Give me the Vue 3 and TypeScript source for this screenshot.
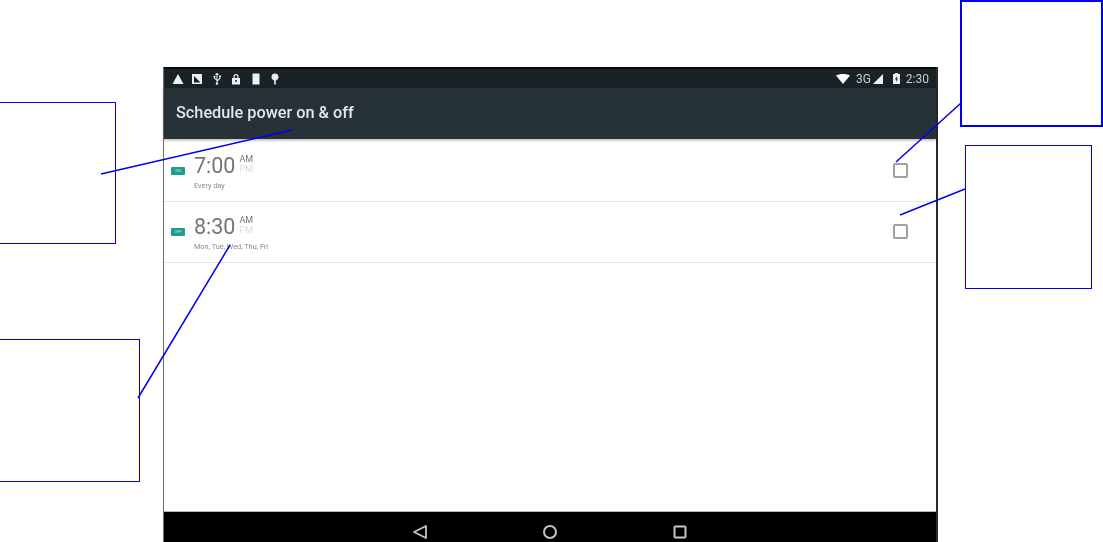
<template>
  <div class="page">
    <div class="tablet">
      <div class="status-bar">
        <div class="status-icons">
          <svg v-for="icon in leftIcons" :key="icon" width="12" height="12" viewBox="0 0 12 12" fill="#eceff1">
            <path :d="icon" fill-rule="evenodd" />
          </svg>
        </div>
        <div class="status-right">
          <svg class="wifi" width="14" height="10" viewBox="0 0 14 10" fill="#fff"><path d="M0 1.500C4 -.5 10 -.5 14 1.500L7 10z" /></svg>
          <span class="net">3G</span>
          <svg class="signal" width="10" height="10" viewBox="0 0 10 10" fill="#eceff1"><path d="M10 0V10H0z" /></svg>
          <svg class="battery" width="7" height="11" viewBox="0 0 7 11" fill="#eceff1">
            <path fill-rule="evenodd" d="M2 0H5V1H7V11H0V1H2zM4 3 2 6.500H3.300L3 9 5 5.500H3.700z" />
          </svg>
          <span class="clock">2:30</span>
        </div>
      </div>

      <div class="app-bar">Schedule power on &amp; off</div>

      <ul class="schedule-list">
        <li v-for="item in schedules" :key="item.time" class="schedule-row">
          <span class="tag">{{ item.tag }}</span>
          <div class="details">
            <div class="time-line">
              <span class="time">{{ item.time }}</span>
              <div class="meridiem">
                <span class="am">AM</span>
                <span class="pm">PM</span>
              </div>
            </div>
            <div class="days">{{ item.days }}</div>
          </div>
          <span class="checkbox"></span>
        </li>
      </ul>

      <div class="nav-bar">
        <svg width="16" height="16" viewBox="0 0 16 16" fill="none" stroke="#c4c4c4" stroke-width="1.800">
          <path d="M14 2V14L2 8z" stroke-linejoin="round" />
        </svg>
        <svg width="16" height="16" viewBox="0 0 16 16" fill="none" stroke="#c4c4c4" stroke-width="2">
          <circle cx="8" cy="8" r="6" />
        </svg>
        <svg width="16" height="16" viewBox="0 0 16 16" fill="none" stroke="#c4c4c4" stroke-width="2">
          <rect x="2.500" y="2.500" width="11" height="11" rx="1" />
        </svg>
      </div>
    </div>

    <!-- annotation callouts drawn over the screenshot -->
    <div class="callout box-title"></div>
    <div class="callout box-days"></div>
    <div class="callout box-check"></div>
    <div class="callout box-row"></div>
    <svg class="leaders" width="1103" height="542" viewBox="0 0 1103 542" stroke="#0000ee" stroke-width="1.500">
      <line x1="101" y1="174" x2="292" y2="130" />
      <line x1="138" y1="398" x2="230" y2="245" />
      <line x1="896" y1="162" x2="961" y2="103" />
      <line x1="900" y1="215" x2="965" y2="189" />
    </svg>
  </div>
</template>

<script setup lang="ts">
const leftIcons = [
  'M6 1 11.500 11H.5z',
  'M1 1H11V11H1zM3 3 9.500 9.500H3z',
  'M5.500 0H6.500L8 2H6.500V7L8.500 5V4H8V2.500H10V4H9.500V5.500L6.500 8.500V9.500A1.200 1.200 0 1 1 5.500 9.500V7.500L3 5.500V4.500A1 1 0 1 1 4 4.500V5L5.500 6.200V2H4z',
  'M3.500 5V3.500A2.500 2.500 0 0 1 8.500 3.500V5H10V11.500H2V5zM4.700 5H7.300V3.500A1.300 1.300 0 0 0 4.700 3.500zM6 7A1 1 0 1 0 6 9 1 1 0 0 0 6 7z',
  'M2.500 .5H9.500V11.500H2.500z',
  'M6 .5A3.500 3.500 0 0 1 6.800 7.400V11.500H5.200V7.400A3.500 3.500 0 0 1 6 .5z',
]

const schedules = [
  { tag: 'ON', time: '7:00', days: 'Every day' },
  { tag: 'OFF', time: '8:30', days: 'Mon, Tue, Wed, Thu, Fri' },
]
</script>

<style>
html,
body {
  margin: 0;
  background: #fff;
  overflow: hidden;
}
</style>

<style scoped>
.page {
  position: relative;
  width: 1103px;
  height: 542px;
  padding: 67px 0 0 163px;
  box-sizing: border-box;
  font-family: Roboto, "Liberation Sans", sans-serif;
}

.tablet {
  display: flex;
  flex-direction: column;
  width: 775px;
  height: 475px;
  box-sizing: border-box;
  border-left: 1px solid #6d6d6d;
  border-right: 2px solid #2a2a2a;
  background: #fff;
}

.status-bar {
  display: flex;
  align-items: center;
  justify-content: space-between;
  height: 21px;
  padding: 0 7px 0 8px;
  box-sizing: border-box;
  border-top: 2px solid #0a0a0a;
  background: #1b2226;
  color: #dfe3e5;
}

.status-icons {
  display: flex;
  gap: 7.400px;
  filter: blur(0.4px);
}

.status-right {
  display: flex;
  align-items: center;
  gap: 3px;
  filter: blur(0.4px);
}

.wifi {
  margin-right: 3px;
}

.net {
  font-size: 12px;
  color: #c9cdcf;
}

.signal {
  margin-left: -1px;
}

.battery {
  margin-left: 7px;
}

.clock {
  margin-left: 3px;
  font-size: 12px;
  color: #c9cdcf;
}

.app-bar {
  display: flex;
  align-items: center;
  height: 51px;
  padding: 0 0 2px 12px;
  box-sizing: border-box;
  background: #263238;
  color: #e4e6e7;
  font-size: 16.300px;
  font-weight: 500;
  filter: blur(0.4px);
  box-shadow: 0 1px 3px rgba(0, 0, 0, 0.35);
}

.schedule-list {
  flex: 1;
  margin: 0;
  padding: 1px 0 0;
  list-style: none;
}

.schedule-row {
  display: flex;
  align-items: center;
  height: 61.500px;
  padding: 0 28px 0 7px;
  box-sizing: border-box;
  border-bottom: 1px solid #e6e6e6;
}

.tag {
  width: 14px;
  height: 8px;
  margin-top: 1px;
  border-radius: 1px;
  background: #1f9d8a;
  color: #bfe8df;
  font-size: 4px;
  line-height: 8px;
  text-align: center;
}

.details {
  flex: 1;
  margin-left: 9px;
  padding-top: 1px;
  filter: blur(0.4px);
}

.time-line {
  display: flex;
  align-items: flex-start;
  gap: 4px;
}

.time {
  color: #757575;
  font-size: 21.500px;
  line-height: 27px;
}

.meridiem {
  display: flex;
  flex-direction: column;
  padding-top: 2px;
  font-size: 9px;
  line-height: 10px;
}

.am {
  color: #777;
}

.pm {
  color: #ddd;
}

.days {
  margin-top: 3px;
  color: #8a8a8a;
  font-size: 7.300px;
  line-height: 8px;
}

.checkbox {
  width: 11px;
  height: 11px;
  border: 2px solid #a0a0a0;
  border-radius: 2px;
}

.nav-bar {
  display: flex;
  align-items: center;
  justify-content: center;
  gap: 114px;
  height: 31px;
  box-sizing: border-box;
  padding-top: 9px;
  border-top: 1px solid #b5b5b5;
  background: #000;
}

.callout {
  position: absolute;
  box-sizing: border-box;
  border: 1.500px solid #0000ee;
}

.box-title {
  left: -2px;
  top: 102px;
  width: 118px;
  height: 142px;
}

.box-days {
  left: -2px;
  top: 339px;
  width: 142px;
  height: 143px;
}

.box-check {
  left: 960px;
  top: 0;
  width: 143px;
  height: 127px;
  border-width: 2px;
}

.box-row {
  left: 965px;
  top: 145px;
  width: 127px;
  height: 144px;
}

.leaders {
  position: absolute;
  left: 0;
  top: 0;
  pointer-events: none;
}
</style>
